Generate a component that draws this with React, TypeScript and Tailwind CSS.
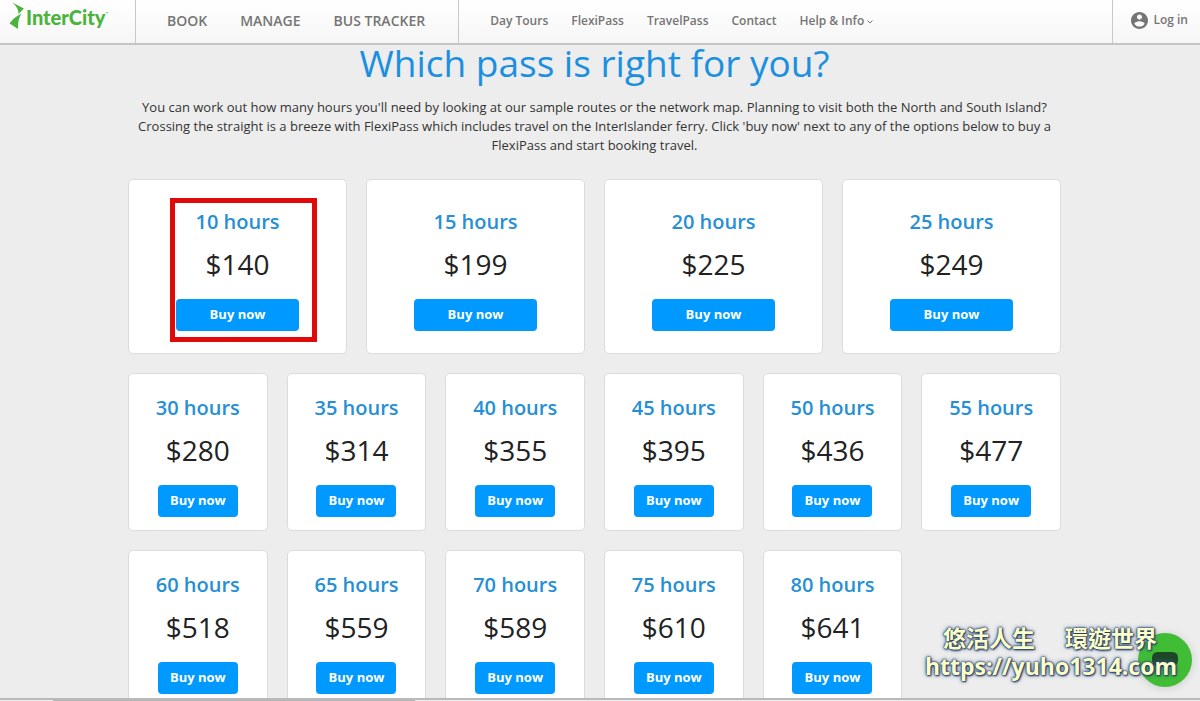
import React from "react";

interface Pass {
  hours: number;
  price: number;
}

interface PassCardProps {
  pass: Pass;
  large?: boolean;
  highlighted?: boolean;
}

const largePasses: Pass[] = [
  { hours: 10, price: 140 },
  { hours: 15, price: 199 },
  { hours: 20, price: 225 },
  { hours: 25, price: 249 },
];

const smallPasses: Pass[] = [
  { hours: 30, price: 280 },
  { hours: 35, price: 314 },
  { hours: 40, price: 355 },
  { hours: 45, price: 395 },
  { hours: 50, price: 436 },
  { hours: 55, price: 477 },
  { hours: 60, price: 518 },
  { hours: 65, price: 559 },
  { hours: 70, price: 589 },
  { hours: 75, price: 610 },
  { hours: 80, price: 641 },
];

const mainLinks = ["BOOK", "MANAGE", "BUS TRACKER"];
const subLinks = ["Day Tours", "FlexiPass", "TravelPass", "Contact"];

const Logo: React.FC = () => (
  <a
    href="#"
    aria-label="InterCity"
    className="flex w-[136px] shrink-0 items-start border-r border-[#c9c9c9] pl-[9px] text-[#4bb33c]">
    <svg viewBox="0 0 15 28" className="mt-[2px] h-7 w-[15px]" fill="currentColor">
      <path d="M3.2 0.4 L14.9 6.6 L9.6 12 Q9.4 5.2 3.2 0.4Z" />
      <path d="M12.8 11.4 Q8.6 16.2 9 27 L0.6 21.4 Q5 14.8 12.8 11.4Z" />
    </svg>
    <span className="ml-[2px] mt-[4px] font-['Lato',sans-serif] text-[20px] leading-[26px] font-black">
      InterCity
    </span>
    <span className="mt-[11px] text-[4px] leading-[6px]">™</span>
  </a>
);

const Header: React.FC = () => (
  <header className="flex h-[45px] shrink-0 border-b-2 border-[#c4c6c4] bg-linear-to-b from-white to-[#f6f6f6] font-semibold text-[#757575]">
    <Logo />
    <nav className="flex items-center gap-[33px] border-r border-[#c9c9c9] pr-[33px] pb-[3px] pl-[31px] text-[14px]">
      {mainLinks.map((link) => (
        <a key={link} href="#">
          {link}
        </a>
      ))}
    </nav>
    <nav className="flex grow items-center gap-[23px] pb-[2px] pl-[31px] text-[12px]">
      {subLinks.map((link) => (
        <a key={link} href="#">
          {link}
        </a>
      ))}
      <a href="#" className="flex items-center gap-[3px]">
        Help &amp; Info
        <svg viewBox="0 0 6 4" className="mt-[3px] h-1 w-[6px]" fill="none" stroke="currentColor">
          <path d="M0.5 0.5 L3 3 L5.5 0.5" />
        </svg>
      </a>
    </nav>
    <a
      href="#"
      className="flex items-center gap-[5px] border-l border-[#c9c9c9] pr-3 pb-[3px] pl-[18px] text-[12px]">
      <svg viewBox="2 2 20 20" className="h-[17px] w-[17px]" fill="currentColor">
        <path d="M12 2C6.48 2 2 6.48 2 12s4.48 10 10 10 10-4.48 10-10S17.52 2 12 2zm0 3c1.66 0 3 1.34 3 3s-1.34 3-3 3-3-1.34-3-3 1.34-3 3-3zm0 14.2c-2.5 0-4.71-1.28-6-3.22.03-1.99 4-3.08 6-3.08 1.99 0 5.97 1.09 6 3.08-1.29 1.94-3.5 3.22-6 3.22z" />
      </svg>
      Log in
    </a>
  </header>
);

const PassCard: React.FC<PassCardProps> = ({ pass, large, highlighted }) => (
  <article
    className={`relative flex flex-col items-center rounded-[5px] border border-[#dcdcdc] bg-white ${
      large ? "pt-7 pb-[22px]" : "pt-5 pb-[13px]"
    }`}>
    <h2 className="text-[20px] leading-7 font-semibold text-[#268fd5]">{pass.hours} hours</h2>
    <p className="mt-[11px] text-[28px] leading-[34px] text-[#222]">${pass.price}</p>
    <button
      type="button"
      className={`mt-[18px] h-8 rounded-[4px] bg-[#0099ff] text-[13px] font-bold text-white ${
        large ? "w-[123px]" : "w-20"
      }`}>
      Buy now
    </button>
    {highlighted && (
      <div className="pointer-events-none absolute top-[18px] left-[41px] h-[144px] w-[147px] border-[5px] border-[#e10a0a]" />
    )}
  </article>
);

const Watermark: React.FC = () => (
  <div className="pointer-events-none absolute right-[23px] bottom-[21px] text-[#fbffc8] [text-shadow:0_0_2px_#26385e,0_0_2px_#26385e,1px_1px_2px_#26385e,0_0_5px_#4f70a8]">
    <p className="flex justify-between pr-5 pl-[18px] font-['Noto_Sans_CJK_TC',sans-serif] text-[23px] leading-[30px] font-bold">
      <span>悠活人生</span>
      <span>環遊世界</span>
    </p>
    <p className="text-[23px] leading-7 font-bold">https://yuho1314.com</p>
  </div>
);

const App: React.FC = () => (
  <div className="relative flex h-screen flex-col overflow-hidden bg-[#ededed] font-['Open_Sans',sans-serif]">
    <Header />
    <main className="min-h-0 grow pr-[11px]">
      <div className="mx-auto max-w-[933px]">
        <h1 className="text-center text-[37px] leading-9 text-[#1b90e0]">
          Which pass is right for you?
        </h1>
        <p className="mt-[17px] text-center text-[13px] leading-[19px] text-[#333]">
          You can work out how many hours you'll need by looking at our sample routes or the network
          map. Planning to visit both the North and South Island?
          <br />
          Crossing the straight is a breeze with FlexiPass which includes travel on the InterIslander
          ferry. Click 'buy now' next to any of the options below to buy a
          <br />
          FlexiPass and start booking travel.
        </p>
        <section className="mt-6 grid grid-cols-4 gap-[19px]">
          {largePasses.map((pass) => (
            <PassCard key={pass.hours} pass={pass} large highlighted={pass.hours === 10} />
          ))}
        </section>
        <section className="mt-[19px] grid grid-cols-6 gap-[19px]">
          {smallPasses.map((pass) => (
            <PassCard key={pass.hours} pass={pass} />
          ))}
        </section>
      </div>
    </main>
    <footer className="relative z-10 h-[3px] shrink-0 border-t-2 border-[#b9b9b9] bg-[#eee]">
      <div className="ml-[53px] h-px w-[362px] bg-[#b5b5b5]" />
    </footer>

    <button
      type="button"
      aria-label="Chat"
      className="absolute right-2 bottom-[14px] flex h-[54px] w-[54px] justify-center rounded-full bg-[#40bd35] pt-[19px] shadow-[0_1px_8px_rgba(0,0,0,0.15)]">
      <svg viewBox="0 0 26 15" className="h-[15px] w-[26px]" fill="#1d4727">
        <path d="M6 0h14q6 0 6 6v2q0 7-7 7H7q-7 0-7-7V6q0-6 6-6z" />
      </svg>
    </button>
    <Watermark />
  </div>
);

export default App;
